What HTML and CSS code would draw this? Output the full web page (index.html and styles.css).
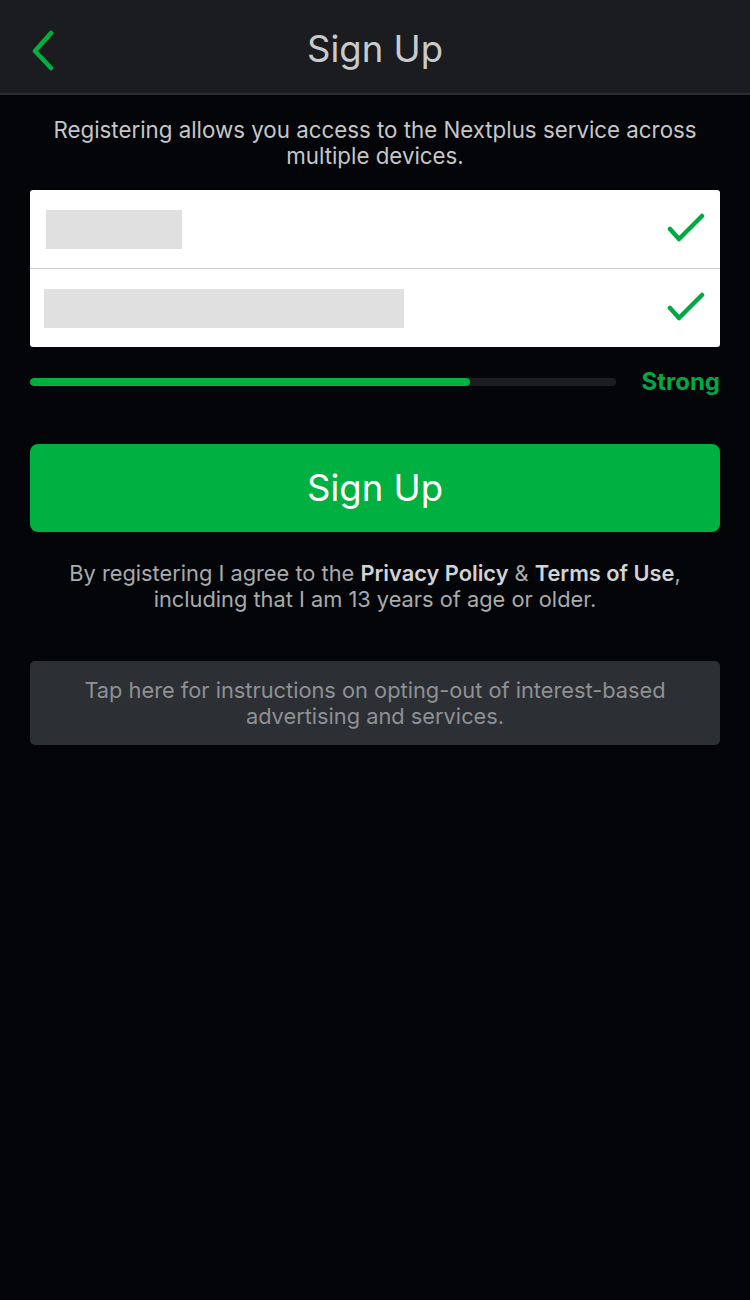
FILE: index.html
```html
<!DOCTYPE html>
<html lang="en">
<head>
  <meta charset="UTF-8" />
  <meta name="viewport" content="width=device-width, initial-scale=1.0" />
  <title>Sign Up</title>
  <link rel="stylesheet" href="styles.css">
</head>
<body>
  <!-- Nav bar -->
  <header class="nav-bar">
    <a class="back-btn" href="#">
      <svg width="30" height="44" viewBox="0 0 30 44">
        <path d="M22 6 L6 24 L22 41" fill="none" stroke="#00b040" stroke-width="4.5" stroke-linecap="round" stroke-linejoin="round"/>
      </svg>
    </a>
    <h1>Sign Up</h1>
  </header>

  <main class="content">
    <p class="intro">Registering allows you access to the Nextplus service across multiple devices.</p>

    <div class="form-card">
      <div class="form-row">
        <span class="field-mask mask-short"></span>
        <svg class="check" width="40" height="32" viewBox="0 0 40 32">
          <path d="M4 16 L13 26 L36 3" fill="none" stroke="#00a844" stroke-width="4.5" stroke-linecap="round" stroke-linejoin="round"/>
        </svg>
      </div>
      <div class="form-row">
        <span class="field-mask mask-long"></span>
        <svg class="check" width="40" height="32" viewBox="0 0 40 32">
          <path d="M4 16 L13 26 L36 3" fill="none" stroke="#00a844" stroke-width="4.5" stroke-linecap="round" stroke-linejoin="round"/>
        </svg>
      </div>
    </div>

    <div class="strength">
      <div class="strength-track">
        <div class="strength-fill" style="width: 75%"></div>
      </div>
      <span class="strength-label">Strong</span>
    </div>

    <button class="signup-btn">Sign Up</button>

    <p class="terms">By registering I agree to the <b>Privacy Policy</b> &amp; <b>Terms of Use</b>, including that I am 13 years of age or older.</p>

    <div class="optout">Tap here for instructions on opting-out of interest-based advertising and services.</div>
  </main>
</body>
</html>
```

FILE: styles.css
```css
* {
  box-sizing: border-box;
}

body {
  margin: 0;
  min-height: 1300px;
  background: #030508;
  font-family: Inter, Roboto, "Noto Sans", sans-serif;
  color: #c8c9cb;
}

.nav-bar {
  position: relative;
  height: 95px;
  background: #1a1c1f;
  border-bottom: 2px solid #2a2c30;
  display: flex;
  align-items: center;
  justify-content: center;
  padding-top: 5px;
}

.back-btn {
  position: absolute;
  left: 29px;
  top: 27px;
  display: block;
}

.nav-bar h1 {
  margin: 0;
  font-size: 36.5px;
  font-weight: 400;
  color: #c9cacc;
}

.content {
  padding: 0 30px;
  display: flex;
  flex-direction: column;
}

.intro {
  margin: 22px 5px 0;
  text-align: center;
  font-size: 22.3px;
  line-height: 26px;
  color: #c6c7c9;
}

.form-card {
  margin-top: 21px;
  background: #fff;
  border-radius: 3px;
  display: flex;
  flex-direction: column;
}

.form-row {
  height: 78px;
  display: flex;
  align-items: center;
  justify-content: space-between;
  padding: 0 14px 0 14px;
}

.form-row + .form-row {
  border-top: 1px solid #d0d0d0;
  height: 79px;
}

.field-mask {
  display: block;
  height: 39px;
  background: #e0e0e0;
}

.mask-short {
  width: 136px;
  margin-left: 2px;
}

.mask-long {
  width: 360px;
}

.check {
  display: block;
}

.strength {
  margin-top: 20px;
  display: flex;
  align-items: center;
  gap: 25px;
}

.strength-track {
  flex: 1;
  height: 8px;
  border-radius: 4px;
  background: #1b1d20;
  overflow: hidden;
}

.strength-fill {
  height: 100%;
  background: #00b040;
  border-radius: 4px;
}

.strength-label {
  font-size: 24px;
  font-weight: 700;
  color: #00a844;
}

.signup-btn {
  margin-top: 48px;
  height: 88px;
  border: none;
  border-radius: 8px;
  background: #00b040;
  color: #fff;
  font-family: inherit;
  font-size: 36.5px;
  font-weight: 400;
  cursor: pointer;
}

.terms {
  margin: 28px 0 0;
  text-align: center;
  font-size: 21.8px;
  line-height: 26px;
  color: #a9abae;
}

.terms b {
  font-weight: 600;
  color: #d2d3d5;
}

.optout {
  margin-top: 49px;
  padding: 16px 40px;
  background: #2c2f33;
  border-radius: 5px;
  text-align: center;
  font-size: 21.8px;
  line-height: 26px;
  color: #8e9195;
}
```
